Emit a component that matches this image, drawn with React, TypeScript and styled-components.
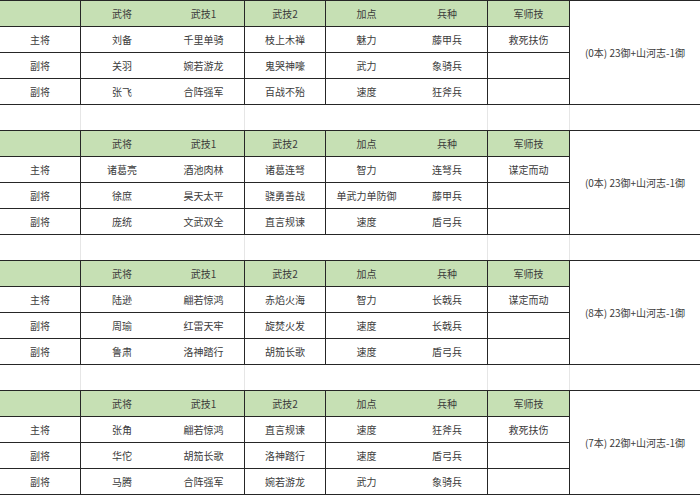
import React from "react";
import styled, { createGlobalStyle } from "styled-components";

const GlobalStyle = createGlobalStyle`
  html, body {
    margin: 0;
    padding: 0;
    background: #ffffff;
  }
  body {
    font-family: "Noto Sans CJK SC", "Noto Sans", sans-serif;
  }
`;

const COLS = "81px 82px 82px 81px 81px 81px 82px 1fr";

const Sheet = styled.div`
  width: 700px;
  display: flex;
  flex-direction: column;
`;

const Table = styled.div`
  display: grid;
  grid-template-columns: ${COLS};
  grid-template-rows: repeat(4, 26px);
  border-top: 1px solid #262626;
`;

const Cell = styled.div<{ $head?: boolean; $line?: boolean }>`
  box-sizing: border-box;
  display: flex;
  align-items: center;
  justify-content: center;
  white-space: nowrap;
  font-size: 10px;
  color: #3b3b3b;
  background: ${(p) => (p.$head ? "#c6e0b4" : "#ffffff")};
  border-bottom: 1px solid #262626;
  border-right: ${(p) => (p.$line ? "1px solid #262626" : "none")};
`;

const Note = styled(Cell)`
  grid-column: 8;
  grid-row: 1 / span 4;
  background: #ffffff;
`;

const Gap = styled.div`
  display: grid;
  grid-template-columns: ${COLS};
  height: 25px;
`;

const GapCell = styled.div<{ $line?: boolean }>`
  box-sizing: border-box;
  border-right: ${(p) => (p.$line ? "1px solid #e6e6e6" : "none")};
`;

// columns that close a bordered group
const LINES = [true, false, true, true, false, true, true];
const GAP_LINES = [true, false, true, false, false, true, true, false];

const HEAD = ["", "武将", "武技1", "武技2", "加点", "兵种", "军师技"];

type Team = { rows: string[][]; note: string };

const teams: Team[] = [
  {
    rows: [
      ["主将", "刘备", "千里单骑", "枝上木禅", "魅力", "藤甲兵", "救死扶伤"],
      ["副将", "关羽", "婉若游龙", "鬼哭神嚎", "武力", "象骑兵", ""],
      ["副将", "张飞", "合阵强军", "百战不殆", "速度", "狂斧兵", ""],
    ],
    note: "(0本) 23御+山河志-1御",
  },
  {
    rows: [
      ["主将", "诸葛亮", "酒池肉林", "诸葛连弩", "智力", "连弩兵", "谋定而动"],
      ["副将", "徐庶", "昊天太平", "骁勇善战", "单武力单防御", "藤甲兵", ""],
      ["副将", "庞统", "文武双全", "直言规谏", "速度", "盾弓兵", ""],
    ],
    note: "(0本) 23御+山河志-1御",
  },
  {
    rows: [
      ["主将", "陆逊", "翩若惊鸿", "赤焰火海", "智力", "长戟兵", "谋定而动"],
      ["副将", "周瑜", "红雷天牢", "旋焚火发", "速度", "长戟兵", ""],
      ["副将", "鲁肃", "洛神踏行", "胡笳长歌", "速度", "盾弓兵", ""],
    ],
    note: "(8本) 23御+山河志-1御",
  },
  {
    rows: [
      ["主将", "张角", "翩若惊鸿", "直言规谏", "速度", "狂斧兵", "救死扶伤"],
      ["副将", "华佗", "胡笳长歌", "洛神踏行", "速度", "盾弓兵", ""],
      ["副将", "马腾", "合阵强军", "婉若游龙", "武力", "象骑兵", ""],
    ],
    note: "(7本) 22御+山河志-1御",
  },
];

function TeamTable({ team }: { team: Team }) {
  return (
    <Table>
      {HEAD.map((h, i) => (
        <Cell key={"h" + i} $head $line={LINES[i]}>
          {h}
        </Cell>
      ))}
      <Note>{team.note}</Note>
      {team.rows.map((row, r) =>
        row.map((v, i) => (
          <Cell key={r + "-" + i} $line={LINES[i]}>
            {v}
          </Cell>
        ))
      )}
    </Table>
  );
}

export default function App() {
  return (
    <>
      <GlobalStyle />
      <Sheet>
        {teams.map((t, i) => (
          <React.Fragment key={i}>
            {i > 0 && (
              <Gap>
                {GAP_LINES.map((l, j) => (
                  <GapCell key={j} $line={l} />
                ))}
              </Gap>
            )}
            <TeamTable team={t} />
          </React.Fragment>
        ))}
      </Sheet>
    </>
  );
}
